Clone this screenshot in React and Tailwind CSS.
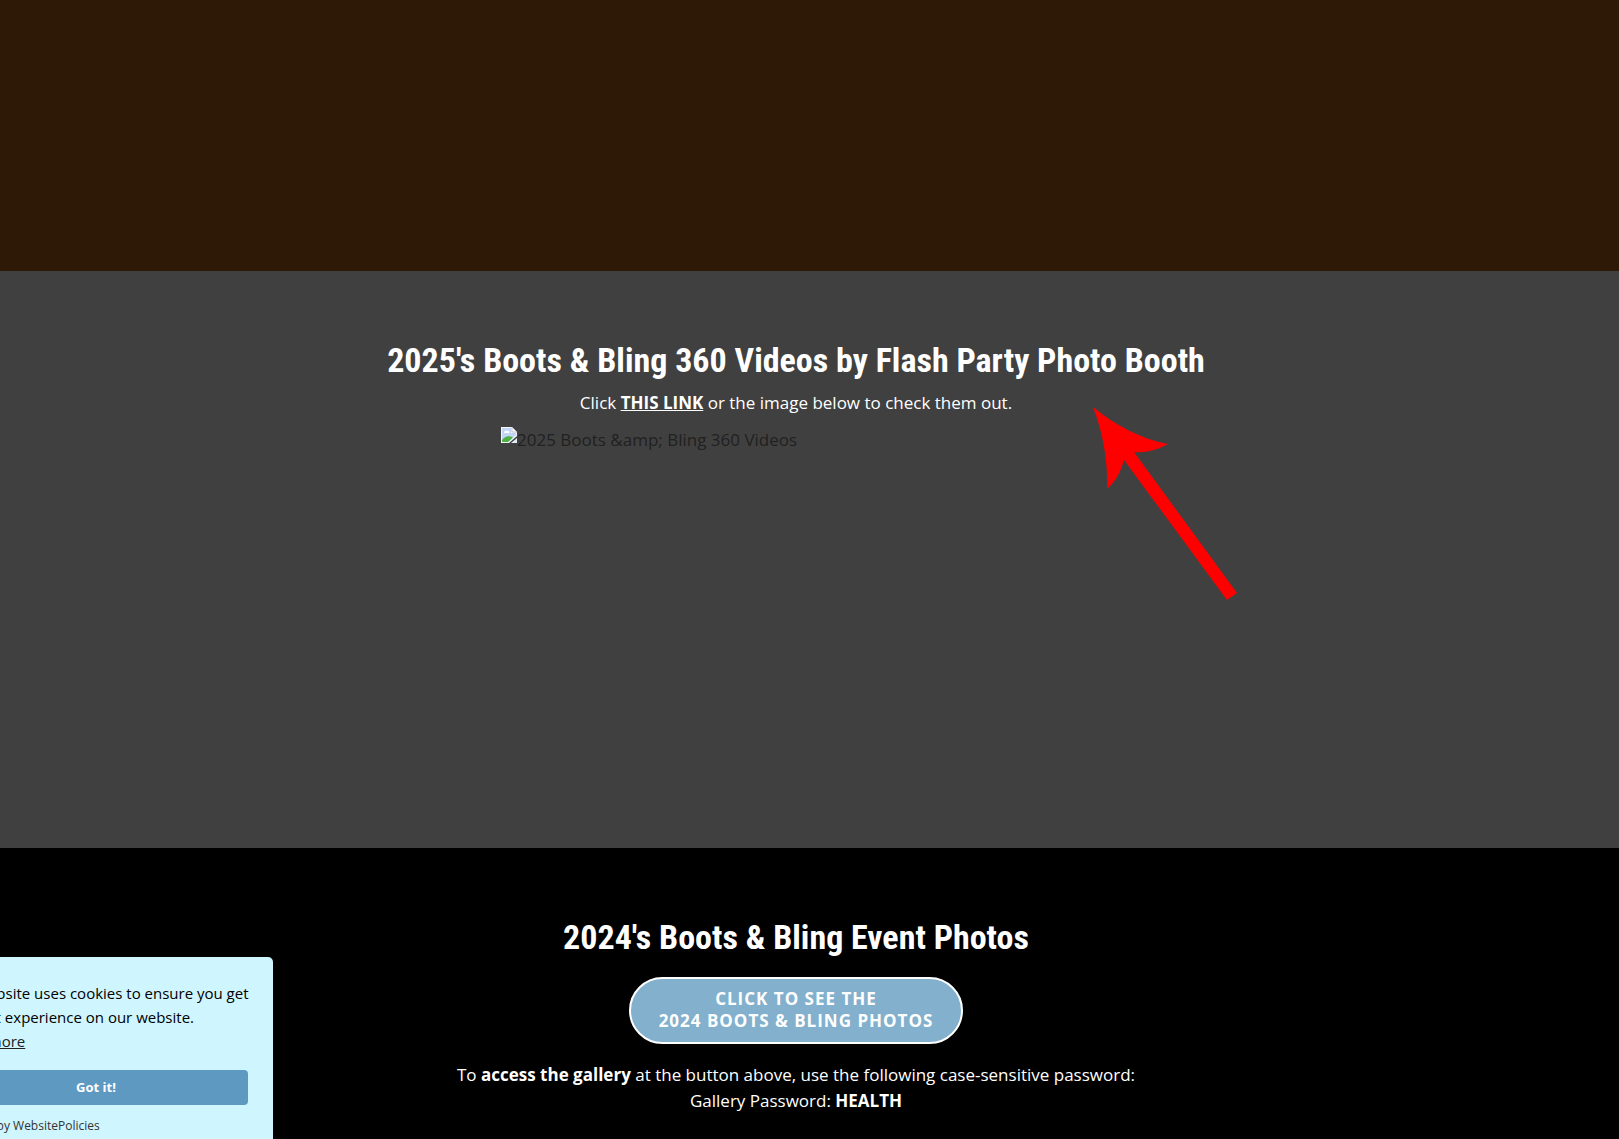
import React, { useState } from "react";

function BrokenImage({ alt }) {
  return (
    <div className="flex min-h-[357px] items-start text-[17px] leading-[26px] text-[#212121]">
      <svg width="16" height="16" viewBox="0 0 16 16" className="shrink-0" aria-hidden="true">
        <path d="M0 0H11L16 5V9L8 16H0Z" fill="#f4f7fb" />
        <path d="M1 1H10V6H15V8L7 15H1Z" fill="#c3d5f5" />
        <path d="M3 6C3 4 5 3 6 4C8 3 9 5 8 6Z" fill="#ffffff" />
        <path d="M1 15V13C4 9 8 8 12 10.500L7 15Z" fill="#4fb044" />
        <path d="M11 0V5H16Z" fill="#ffffff" stroke="#9aa3b0" strokeWidth="0.6" />
        <path d="M16 11V16H10Z" fill="#e4ecf5" />
      </svg>
      <span>{alt}</span>
    </div>
  );
}

function Arrow() {
  return (
    <svg
      width="148"
      height="198"
      viewBox="0 0 148 198"
      className="pointer-events-none absolute top-[136px] left-[1092px]"
      aria-hidden="true"
    >
      <path
        d="M1 0C23 18 49 32 76 37C65 43 54 46 42 45L145 186L135 193L32 53C29 64 24 74 15 82C16 54 11 26 1 0Z"
        fill="#ff0000"
      />
    </svg>
  );
}

function CookieNotice({ onClose }) {
  return (
    <div
      role="dialog"
      aria-label="Cookie notice"
      className="absolute bottom-0 -left-[81px] h-[182px] w-[354px] rounded-tr-[5px] bg-[#cff5ff] px-[25px] pt-6 text-[15px] leading-6 text-black"
    >
      <p className="whitespace-nowrap">
        This website uses cookies to ensure you get
        <br />
        the best experience on our website.
        <br />
        <a href="#cookies" className="text-[#222222] underline">
          Learn more
        </a>
      </p>
      <button
        onClick={onClose}
        className="mt-[17px] h-[35px] w-full rounded-[4px] bg-[#5e99c2] pb-[2px] text-[13px] font-bold text-white"
      >
        Got it!
      </button>
      <p className="mt-[9px] text-[12px] text-[#333333]">
        Powered by <a href="#policies">WebsitePolicies</a>
      </p>
    </div>
  );
}

export default function App() {
  const [showCookies, setShowCookies] = useState(true);

  return (
    <div className="relative min-h-screen overflow-hidden bg-black font-['Open_Sans','Noto_Sans',sans-serif] text-[17px] leading-[26px] text-white">
      <div className="h-[271px] bg-[#2e1907]" />

      <section className="relative bg-[#404040] pt-16 pr-[27px] pb-16">
        <h2 className="text-center font-['Roboto_Condensed','Liberation_Sans_Narrow',sans-serif] text-[34px] leading-[50px] font-bold">
          2025's Boots &amp; Bling 360 Videos by Flash Party Photo Booth
        </h2>
        <p className="mt-[5px] text-center">
          Click{" "}
          <a href="#videos" className="font-bold underline">
            THIS LINK
          </a>{" "}
          or the image below to check them out.
        </p>
        <a href="#videos" className="mx-auto mt-[11px] block max-w-[590px]">
          <BrokenImage alt="2025 Boots &amp;amp; Bling 360 Videos" />
        </a>
        <Arrow />
      </section>

      <section className="bg-black pt-16 pr-[27px] text-center">
        <h2 className="font-['Roboto_Condensed','Liberation_Sans_Narrow',sans-serif] text-[34px] leading-[50px] font-bold">
          2024's Boots &amp; Bling Event Photos
        </h2>
        <a
          href="#photos"
          className="mt-[15px] inline-block rounded-full border-2 border-white bg-[#82b0cd] px-7 pt-[9px] pb-[10px] text-[17px] leading-[22px] font-bold tracking-[1px]"
        >
          CLICK TO SEE THE
          <br />
          2024 BOOTS &amp; BLING PHOTOS
        </a>
        <p className="mt-[18px]">
          To <strong>access the gallery</strong> at the button above, use the following
          case-sensitive password:
          <br />
          Gallery Password: <strong>HEALTH</strong>
        </p>
      </section>

      {showCookies && <CookieNotice onClose={() => setShowCookies(false)} />}
    </div>
  );
}
